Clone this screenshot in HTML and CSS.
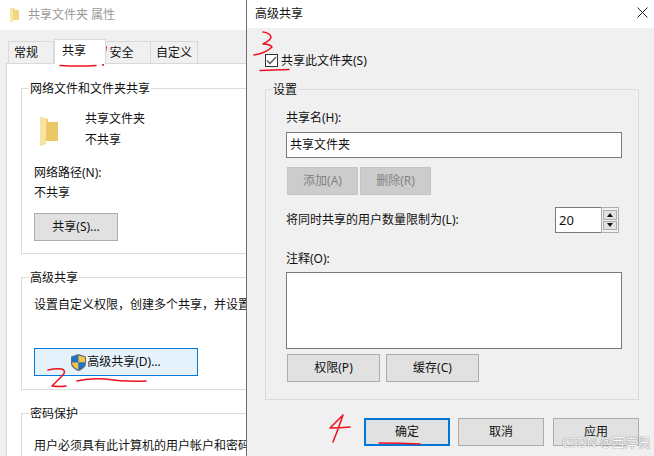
FILE: index.html
```html
<!DOCTYPE html>
<html lang="zh-CN">
<head>
<meta charset="utf-8">
<title>共享文件夹 属性</title>
<link rel="stylesheet" href="styles.css">
</head>
<body>
<section class="window props">
  <header class="titlebar props-title">
    <svg class="title-folder" width="9" height="14" viewBox="0 0 9 14"><path d="M0 0h4l1 2h4v10H3l-3 2z" fill="#f3d680"/><path d="M0 0h3v14H0z" fill="#fbe7a8"/></svg>
    <span>共享文件夹 属性</span>
  </header>
  <div class="props-body">
    <nav class="tabs">
      <span class="tab tab-a">常规</span>
      <span class="tab tab-active">共享</span>
      <span class="tab tab-b">安全</span>
      <span class="tab tab-c">自定义</span>
    </nav>
    <div class="panel">
      <fieldset class="group g-net">
        <legend>网络文件和文件夹共享</legend>
        <div class="share-row">
          <svg class="big-folder" width="19" height="29" viewBox="0 0 19 29"><path d="M0 0l8 2v3h10v19H6v3l-6 2z" fill="#f0cf72"/><path d="M0 0l6 2v25l-6 2z" fill="#f9e3a0"/><path d="M6 5h12v19H6z" fill="#ecc765"/></svg>
          <div class="share-text"><p>共享文件夹</p><p>不共享</p></div>
        </div>
        <p class="path-label">网络路径(N):</p>
        <p class="path-value">不共享</p>
        <button class="btn btn-share">共享(S)...</button>
      </fieldset>
      <fieldset class="group g-adv">
        <legend>高级共享</legend>
        <p class="desc">设置自定义权限，创建多个共享，并设置其他高级共享选项。</p>
        <button class="btn btn-adv">
          <svg width="15" height="17" viewBox="0 0 15 17"><path d="M7.5 0L15 2.5V9c0 4-3.500 6.500-7.500 8C3.500 15.500 0 13 0 9V2.500z" fill="#5b6d80"/><path d="M7.500 1.500v7H1V3.300z" fill="#1c74c8"/><path d="M7.500 1.500v7H14V3.300z" fill="#f6c544"/><path d="M7.500 8.500v7C4 14.300 1.200 12 1 8.500z" fill="#f6c544"/><path d="M7.500 8.500v7c3.500-1.200 6.300-3.500 6.500-7z" fill="#1c74c8"/></svg>
          <span>高级共享(D)...</span>
        </button>
      </fieldset>
      <fieldset class="group g-pass">
        <legend>密码保护</legend>
        <p class="desc">用户必须具有此计算机的用户帐户和密码，才能访问共享文件夹。</p>
      </fieldset>
    </div>
  </div>
</section>

<section class="window dialog">
  <header class="titlebar dialog-title">
    <span>高级共享</span>
    <svg class="close" width="11" height="11" viewBox="0 0 11 11"><path d="M.5.500l10 10M10.500.500l-10 10" stroke="#222" fill="none"/></svg>
  </header>
  <div class="dialog-body">
    <label class="check-row">
      <span class="checkbox"><svg width="11" height="9" viewBox="0 0 11 9"><path d="M1 4.500l3 3 6-6.500" stroke="#555" stroke-width="1.300" fill="none"/></svg></span>
      <span class="check-text">共享此文件夹(S)</span>
    </label>
    <fieldset class="group g-set">
      <legend>设置</legend>
      <p class="name-label">共享名(H):</p>
      <div class="field name-field">共享文件夹</div>
      <div class="btn-row row-add">
        <button class="btn btn-off">添加(A)</button>
        <button class="btn btn-off">删除(R)</button>
      </div>
      <div class="limit-row">
        <span>将同时共享的用户数量限制为(L):</span>
        <div class="spinner">
          <div class="spin-value">20</div>
          <div class="spin-btns">
            <span class="spin-btn"><i class="arrow-up"></i></span>
            <span class="spin-btn"><i class="arrow-down"></i></span>
          </div>
        </div>
      </div>
      <p class="note-label">注释(O):</p>
      <div class="field note-field"></div>
      <div class="btn-row row-perm">
        <button class="btn btn-wide">权限(P)</button>
        <button class="btn btn-wide">缓存(C)</button>
      </div>
    </fieldset>
    <footer class="dialog-actions">
      <button class="btn btn-act btn-default">确定</button>
      <button class="btn btn-act">取消</button>
      <button class="btn btn-act">应用</button>
    </footer>
  </div>
</section>

<svg class="ink" width="654" height="456" viewBox="0 0 654 456">
  <g fill="none" stroke="#f01020" stroke-linecap="round" stroke-linejoin="round">
    <path d="M106 47L103 65" stroke-width="1.800"/>
    <path d="M60 65.500Q78 66.500 96 65.500" stroke-width="1.500"/>
    <path d="M48 370Q56 368 62 369Q67 371 62 376Q56 382 52 386Q60 387 66 386" stroke-width="1.500"/>
    <path d="M77 381Q90 378 105 379Q125 382 146 381" stroke-width="1.500"/>
    <path d="M263 32Q270 33 271 37Q271 40 263 44Q270 44 272 47Q266 53 254 55" stroke-width="1.500"/>
    <path d="M260 70.500Q275 70 289 69.500" stroke-width="1.500"/>
    <path d="M343 415L330 428Q340 428 350 427M343 415Q338 430 333 442" stroke-width="1.500"/>
    <path d="M379 443Q400 443 420 444" stroke-width="1.500"/>
  </g>
</svg>
<div class="watermark">CSDN @西岸贤</div>
</body>
</html>
```
FILE: styles.css
```css
* { box-sizing: border-box; }
html, body { margin: 0; padding: 0; }
body {
  width: 654px;
  height: 456px;
  position: relative;
  overflow: hidden;
  background: #fff;
  font: 12px/16px "Noto Sans", "Noto Sans CJK SC", sans-serif;
  color: #111;
}
p { margin: 0; }
.window { position: absolute; top: 0; height: 456px; overflow: hidden; }
.props { left: 0; width: 247px; }
.dialog { left: 246px; width: 408px; border-left: 1px solid #6f6f6f; background: #f0f0f0; }
.titlebar { display: flex; align-items: center; background: #fff; }
.props-title { height: 30px; padding-left: 10px; color: #9a9a9a; gap: 9px; }
.dialog-title { height: 28px; padding: 0 6px 0 8px; justify-content: space-between; }
.close { margin-bottom: 4px; }
.props-body { height: 426px; width: 420px; background: #f0f0f0; padding: 9px 0 0 6px; }

.tabs { display: flex; height: 24px; padding-left: 2px; align-items: flex-end; }
.tab {
  height: 22px; display: flex; align-items: center; justify-content: center;
  background: #f0f0f0; border: 1px solid #d9d9d9; border-bottom: 0;
}
.tab-a { width: 46px; padding-right: 10px; }
.tab-active { width: 52px; height: 25px; background: #fff; padding: 0 12px 3px 0; position: relative; z-index: 1; margin-bottom: -1px; }
.tab-b { width: 45px; border-left: 0; padding-right: 13px; }
.tab-c { width: 47px; border-left: 0; }
.panel { background: #fff; border: 1px solid #d9d9d9; height: 420px; padding: 16px 0 0 14px; }

.group { margin: 0; border: 1px solid #dcdcdc; padding: 0; min-width: 0; }
.group legend { padding: 0 1px; line-height: 18px; height: 16px; }
.g-net, .g-adv, .g-pass { width: 380px; padding-left: 12px; }
.g-net legend, .g-adv legend, .g-pass legend { margin-left: -5px; }
.g-net { height: 174px; margin-bottom: 15px; }
.share-row { display: flex; align-items: flex-start; margin-top: 14px; padding-left: 6px; }
.big-folder { margin-top: 7px; }
.share-text { margin: 1px 0 0 26px; display: flex; flex-direction: column; gap: 5px; }
.path-label { margin-top: 17px; }
.path-value { margin-top: 4px; }
.btn {
  display: flex; align-items: center; justify-content: center; gap: 1px;
  font: inherit; color: #111; height: 28px; padding: 0;
  background: #e1e1e1; border: 1px solid #adadad; border-radius: 0;
}
.btn-share { width: 84px; margin-top: 12px; }
.g-adv { height: 121px; margin-bottom: 15px; }
.desc { white-space: nowrap; margin-top: 12px; }
.btn-adv { width: 164px; margin-top: 35px; background: #e5f1fb; border-color: #0078d7; }
.g-pass { height: 100px; }
.g-pass .desc { margin-top: 17px; }

.dialog-body { padding: 0 0 0 18px; }
.check-row { display: flex; align-items: center; gap: 3px; margin-top: 25px; height: 14px; }
.check-text { padding-top: 1px; }
.checkbox {
  width: 13px; height: 13px; border: 1px solid #333; background: #fff;
  display: flex; align-items: center; justify-content: center;
}
.g-set { width: 374px; height: 319px; margin-top: 14px; padding-left: 20px; }
.g-set legend { margin-left: -14px; }
.name-label { margin-top: 13px; }
.field { background: #fff; border: 1px solid #7a7a7a; width: 336px; }
.name-field { height: 26px; margin-top: 6px; padding: 4px 3px; }
.btn-row { display: flex; padding-left: 1px; }
.row-add { gap: 2px; margin-top: 9px; }
.btn-off { width: 71px; background: #ccc; border-color: #c4c4c4; color: #838383; }
.limit-row { display: flex; justify-content: space-between; align-items: center; width: 333px; height: 26px; margin-top: 12px; }
.spinner { display: flex; width: 64px; height: 26px; border: 1px solid #7a7a7a; border-right: 0; background: #fff; }
.spin-value { flex: 1; padding: 4px 3px; font-size: 13px; }
.spin-btns {
  width: 18px; margin: -1px 0; height: 26px; border: 1px solid #adadad; background: #f0f0f0;
  padding: 2px 1px; display: flex; flex-direction: column; gap: 1px; flex: none;
}
.spin-btn { flex: 1; background: #e1e1e1; border: 1px solid #adadad; display: flex; align-items: center; justify-content: center; }
.arrow-up, .arrow-down { width: 0; height: 0; border-left: 3.500px solid transparent; border-right: 3.500px solid transparent; }
.arrow-up { border-bottom: 4px solid #111; }
.arrow-down { border-top: 4px solid #111; }
.note-label { margin-top: 18px; }
.note-field { height: 77px; margin-top: 5px; }
.row-perm { gap: 6px; margin-top: 5px; }
.btn-wide { width: 93px; }
.dialog-actions { display: flex; gap: 8px; margin: 18px 0 0 99px; width: 275px; }
.btn-act { width: 86px; flex: none; }
.btn-act + .btn-act + .btn-act { margin-left: 1px; }
.btn-default { border: 2px solid #0078d7; }

.ink { position: absolute; left: 0; top: 0; pointer-events: none; }
.watermark {
  position: absolute; left: 562px; top: 434px; font-size: 13px; color: #f8f8f8; white-space: nowrap;
  text-shadow: 0 0 1px #888, 0 0 1px #888;
}
```
